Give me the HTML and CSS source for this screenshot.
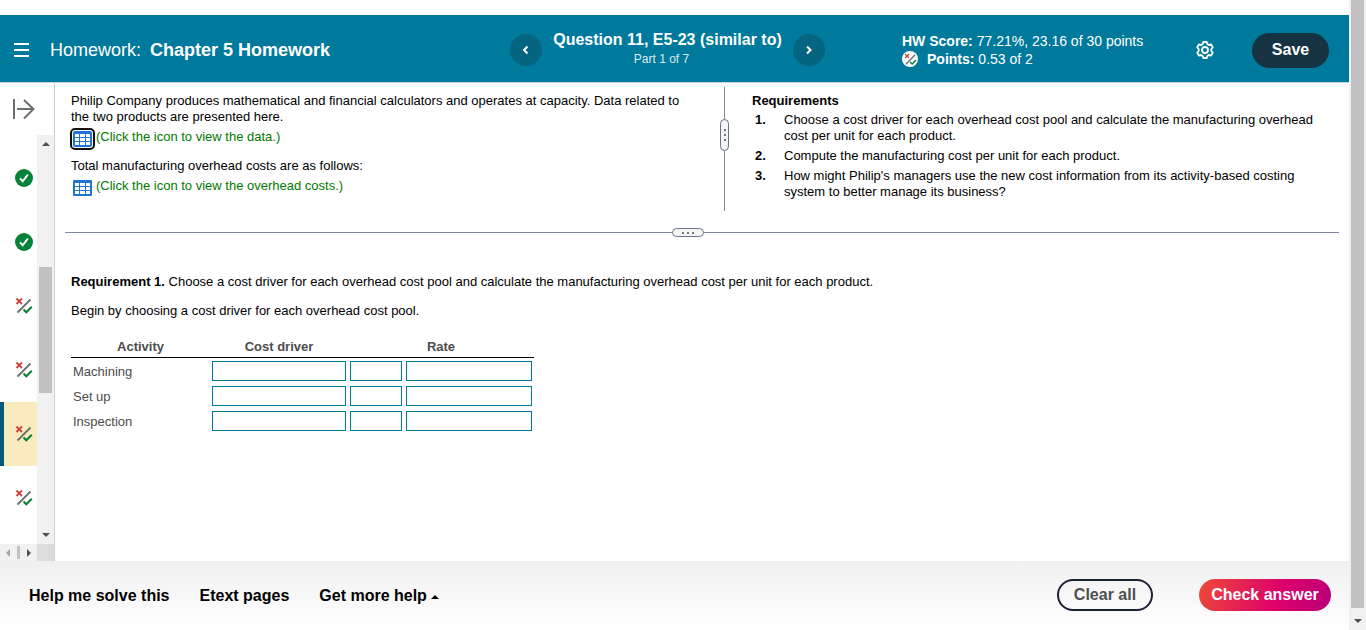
FILE: index.html
```
<!DOCTYPE html>
<html lang="en">

<head>
    <meta charset="UTF-8">
    <meta name="viewport" content="width=device-width, initial-scale=1.0">
    <title>Chapter 5 Homework</title>
    <link rel="stylesheet" href="styles.css">
</head>

<body>
    <!-- shared icons -->
    <svg class="sprite" aria-hidden="true">
        <symbol id="icon-done" viewBox="0 0 18 18">
            <circle cx="9" cy="9" r="9" fill="#038238" />
            <path d="M5 9.4l2.7 2.9 5.2-6.8" fill="none" stroke="#fff" stroke-width="2" />
        </symbol>
        <symbol id="icon-partial" viewBox="0 0 18 18">
            <path d="M1.5 1.5l5.5 5.5M7 1.5l-5.5 5.5" fill="none" stroke="#d0413e" stroke-width="1.8" />
            <path d="M2.5 15.5l13-13" fill="none" stroke="#6a7070" stroke-width="1.8" />
            <path d="M8.5 12.5l2.8 2.8 5.5-5.5" fill="none" stroke="#038238" stroke-width="2" />
        </symbol>
        <symbol id="icon-table" viewBox="0 0 19 16">
            <rect width="19" height="16" rx="1" fill="#2074d8" />
            <path d="M2 3h4v3H2zM7 3h5v3H7zM13 3h4v3h-4zM2 7h4v3H2zM7 7h5v3H7zM13 7h4v3h-4zM2 11h4v3H2zM7 11h5v3H7zM13 11h4v3h-4z" fill="#fff" />
        </symbol>
    </svg>

    <div class="app">
        <header class="header">
            <button type="button" class="menu-btn" aria-label="Menu">
                <svg width="15" height="14" viewBox="0 0 15 14"><path d="M0 1h15M0 7h15M0 13h15" stroke="#fff" stroke-width="2" /></svg>
            </button>
            <h1 class="title">Homework: <b>Chapter 5 Homework</b></h1>
            <nav class="question-nav">
                <button type="button" class="round-btn" aria-label="Previous question">
                    <svg width="8" height="10" viewBox="0 0 8 10"><path d="M5.5 1.5L2 5l3.5 3.5" fill="none" stroke="#fff" stroke-width="2" /></svg>
                </button>
                <div class="question">
                    <h2>Question 11, E5-23 (similar to)</h2>
                    <p>Part 1 of 7</p>
                </div>
                <button type="button" class="round-btn" aria-label="Next question">
                    <svg width="8" height="10" viewBox="0 0 8 10"><path d="M2 1.5L5.5 5 2 8.5" fill="none" stroke="#fff" stroke-width="2" /></svg>
                </button>
            </nav>
            <div class="tools">
                <div class="score">
                    <p><b>HW Score:</b> 77.21%, 23.16 of 30 points</p>
                    <p class="points"><span class="points-icon"><svg width="13" height="13"><use href="#icon-partial" /></svg></span><span><b>Points:</b> 0.53 of 2</span></p>
                </div>
                <button type="button" class="gear-btn" aria-label="Settings">
                    <svg width="18" height="18" viewBox="0 0 18 18" fill="none" stroke="#fff" stroke-width="1.8" stroke-linejoin="round">
                        <path d="M7.3 1h3.4l.7 2.1 1.5.9 2.2-.5 1.7 2.9L15.3 8v2l1.5 1.6-1.7 2.9-2.2-.5-1.5.9-.7 2.1H7.3l-.7-2.1-1.5-.9-2.2.5-1.7-2.900L2.7 10V8L1.2 6.400l1.700-2.900 2.200.5 1.500-.9z" />
                        <circle cx="9" cy="9" r="3" />
                    </svg>
                </button>
                <button type="button" class="save-btn">Save</button>
            </div>
        </header>

        <div class="workspace">
            <aside class="sidebar">
                <button type="button" class="expand-btn" aria-label="Expand question list">
                    <svg width="23" height="21" viewBox="0 0 23 21"><path d="M2 0v20M5 10h16.500M12 1l9.500 9-9.500 9.500" fill="none" stroke="#6a7070" stroke-width="2" /></svg>
                </button>
                <div class="list-area">
                    <ul class="question-list">
                        <li><a href="#" aria-label="Question 7"><svg width="18" height="18"><use href="#icon-done" /></svg></a></li>
                        <li><a href="#" aria-label="Question 8"><svg width="18" height="18"><use href="#icon-done" /></svg></a></li>
                        <li><a href="#" aria-label="Question 9"><svg width="18" height="18"><use href="#icon-partial" /></svg></a></li>
                        <li><a href="#" aria-label="Question 10"><svg width="18" height="18"><use href="#icon-partial" /></svg></a></li>
                        <li class="active"><a href="#" aria-label="Question 11"><svg width="18" height="18"><use href="#icon-partial" /></svg></a></li>
                        <li><a href="#" aria-label="Question 12"><svg width="18" height="18"><use href="#icon-partial" /></svg></a></li>
                    </ul>
                    <div class="scrollbar">
                        <i class="arrow up"></i>
                        <div class="track list-track"><div class="thumb"></div></div>
                        <i class="arrow down"></i>
                    </div>
                </div>
                <div class="scroll-x">
                    <div class="scroll-x-bar"><i class="arrow left"></i><i class="thumb-x"></i><i class="arrow right"></i></div>
                    <div class="corner"></div>
                </div>
            </aside>

            <main class="content">
                <div class="panels">
                    <section class="problem">
                        <p>Philip Company produces mathematical and financial calculators and operates at capacity. Data related to the two products are presented here.</p>
                        <a href="#" class="view-link"><span class="table-icon focused"><svg width="19" height="16"><use href="#icon-table" /></svg></span>(Click the icon to view the data.)</a>
                        <p>Total manufacturing overhead costs are as follows:</p>
                        <a href="#" class="view-link"><span class="table-icon"><svg width="19" height="16"><use href="#icon-table" /></svg></span>(Click the icon to view the overhead costs.)</a>
                    </section>
                    <div class="divider-y"><span class="handle"><i></i><i></i><i></i></span></div>
                    <section class="requirements">
                        <h3>Requirements</h3>
                        <dl>
                            <dt>1.</dt>
                            <dd>Choose a cost driver for each overhead cost pool and calculate the manufacturing overhead cost per unit for each product.</dd>
                            <dt>2.</dt>
                            <dd>Compute the manufacturing cost per unit for each product.</dd>
                            <dt>3.</dt>
                            <dd>How might Philip's managers use the new cost information from its activity-based costing system to better manage its business?</dd>
                        </dl>
                    </section>
                </div>
                <div class="divider-x"><span class="handle"><i></i><i></i><i></i></span></div>

                <section class="answer">
                    <p><b>Requirement 1.</b> Choose a cost driver for each overhead cost pool and calculate the manufacturing overhead cost per unit for each product.</p>
                    <p>Begin by choosing a cost driver for each overhead cost pool.</p>
                    <table class="driver-table">
                        <colgroup>
                            <col class="col-activity">
                            <col class="col-driver">
                            <col class="col-amount">
                            <col class="col-unit">
                        </colgroup>
                        <thead>
                            <tr>
                                <th>Activity</th>
                                <th>Cost driver</th>
                                <th colspan="2">Rate</th>
                            </tr>
                        </thead>
                        <tbody>
                            <tr>
                                <td>Machining</td>
                                <td><input type="text" aria-label="Machining cost driver"></td>
                                <td><input type="text" aria-label="Machining rate"></td>
                                <td><input type="text" aria-label="Machining rate unit"></td>
                            </tr>
                            <tr>
                                <td>Set up</td>
                                <td><input type="text" aria-label="Set up cost driver"></td>
                                <td><input type="text" aria-label="Set up rate"></td>
                                <td><input type="text" aria-label="Set up rate unit"></td>
                            </tr>
                            <tr>
                                <td>Inspection</td>
                                <td><input type="text" aria-label="Inspection cost driver"></td>
                                <td><input type="text" aria-label="Inspection rate"></td>
                                <td><input type="text" aria-label="Inspection rate unit"></td>
                            </tr>
                        </tbody>
                    </table>
                </section>
            </main>
        </div>

        <footer class="footer">
            <div class="help-links">
                <a href="#">Help me solve this</a>
                <a href="#">Etext pages</a>
                <a href="#">Get more help <i class="caret"></i></a>
            </div>
            <button type="button" class="clear-btn">Clear all</button>
            <button type="button" class="check-btn">Check answer</button>
        </footer>
    </div>

    <div class="scrollbar page-scrollbar">
        <div class="track"><div class="thumb"></div></div>
        <i class="arrow down"></i>
    </div>
</body>

</html>
```
FILE: styles.css
```
* {
    box-sizing: border-box;
}

body,
h1,
h2,
h3,
p,
ul,
dl,
dd {
    margin: 0;
    padding: 0;
}

body {
    display: flex;
    min-height: 100vh;
    background: #fff;
    color: #000;
    font-family: "Liberation Sans", Arial, sans-serif;
    font-size: 13px;
    line-height: 16px;
}

button {
    padding: 0;
    border: 0;
    background: none;
    font-family: inherit;
    cursor: pointer;
}

a {
    text-decoration: none;
}

svg {
    display: block;
}

.sprite {
    position: absolute;
    width: 0;
    height: 0;
}

.app {
    flex: 1;
    display: flex;
    flex-direction: column;
    min-width: 0;
    padding-top: 15px;
}

/* header */
.header {
    display: flex;
    align-items: center;
    height: 68px;
    padding: 3px 20px 0 14px;
    background: #007a9c;
    border-bottom: 1px solid #c7cfdc;
    color: #fff;
}

.title {
    flex: 1;
    margin-left: 21px;
    font-size: 18px;
    font-weight: normal;
    line-height: 20px;
}

.title b {
    margin-left: 4px;
}

.question-nav {
    display: flex;
    align-items: center;
    justify-content: space-between;
    width: 315px;
    margin-right: 77px;
}

.round-btn {
    display: flex;
    align-items: center;
    justify-content: center;
    width: 32px;
    height: 32px;
    border-radius: 50%;
    background: #05647f;
}

.question {
    padding-bottom: 2px;
    text-align: center;
}

.question h2 {
    font-size: 16px;
    line-height: 20px;
}

.question p {
    padding-right: 12px;
    font-size: 12px;
    line-height: 18px;
    color: #dcecf1;
}

.tools {
    display: flex;
    align-items: center;
    width: 427px;
}

.score {
    flex: 1;
    font-size: 14px;
    line-height: 18px;
}

.points {
    display: flex;
    align-items: center;
    gap: 9px;
}

.points-icon {
    display: flex;
    align-items: center;
    justify-content: center;
    width: 16px;
    height: 16px;
    border-radius: 50%;
    background: #fff;
}

.gear-btn {
    margin-right: 38px;
}

.save-btn {
    width: 77px;
    height: 35px;
    border-radius: 18px;
    background: #163344;
    color: #fff;
    font-size: 16px;
    font-weight: bold;
}

/* question list */
.workspace {
    flex: 1;
    display: flex;
}

.sidebar {
    display: flex;
    flex-direction: column;
    width: 55px;
    border-right: 1px solid #c7cfdc;
}

.expand-btn {
    height: 52px;
    padding-left: 12px;
}

.list-area {
    flex: 1;
    display: flex;
}

.question-list {
    flex: 1;
    padding-top: 11px;
    list-style: none;
}

.question-list a {
    display: flex;
    align-items: center;
    height: 64px;
    padding-left: 15px;
}

.question-list .active {
    background: #f9ebbd;
    box-shadow: inset 4px 0 #005a78;
}

/* scroll bars */
.scrollbar {
    display: flex;
    flex-direction: column;
    align-items: center;
    justify-content: space-between;
    width: 17px;
    padding: 7px 0;
    background: #f1f1f1;
}

.track {
    flex: 1;
    display: flex;
    width: 13px;
}

.list-track {
    padding: 121px 0 140px;
}

.thumb {
    width: 100%;
    background: #c1c1c1;
}

.page-scrollbar {
    padding-top: 0;
}

.page-scrollbar .track {
    margin-bottom: 11px;
}

.arrow {
    border: 4px solid transparent;
}

.arrow.up {
    border-top: 0;
    border-bottom-color: #505050;
}

.arrow.down {
    border-bottom: 0;
    border-top-color: #505050;
}

.arrow.left {
    border-left: 0;
    border-right-color: #a3a3a3;
}

.arrow.right {
    border-right: 0;
    border-left-color: #505050;
}

.scroll-x {
    display: flex;
    height: 17px;
}

.scroll-x-bar {
    flex: 1;
    display: flex;
    align-items: center;
    justify-content: space-between;
    padding: 0 6px;
    background: #f1f1f1;
}

.thumb-x {
    width: 3px;
    height: 13px;
    background: #c1c1c1;
}

.corner {
    width: 17px;
    background: #dcdcdc;
}

/* problem text */
.content {
    flex: 1;
    padding: 4px 10px 0;
}

.panels {
    display: flex;
}

.problem {
    width: 653px;
    padding: 6px 35px 0 6px;
}

.view-link {
    display: flex;
    margin-bottom: 13px;
    padding-top: 4px;
    color: #007a00;
}

.table-icon {
    width: 25px;
    height: 16px;
    padding: 2px 0 0 2px;
}

.focused svg {
    outline: 2px solid #101010;
    outline-offset: 1px;
    border-radius: 2px;
}

.divider-y {
    display: flex;
    align-items: center;
    justify-content: center;
    width: 13px;
    height: 124px;
    padding-bottom: 28px;
    background: linear-gradient(#8088a0, #8088a0) center / 1px 100% no-repeat;
}

.divider-x {
    display: flex;
    align-items: center;
    justify-content: center;
    height: 9px;
    margin-top: 17px;
    padding-right: 28px;
    background: linear-gradient(#8088a0, #8088a0) center / 100% 1px no-repeat;
}

.handle {
    display: flex;
    align-items: center;
    justify-content: center;
    gap: 3px;
    border: 1px solid #6a7488;
    border-radius: 5px;
    background: #f5f5f5;
}

.handle i {
    width: 2px;
    height: 2px;
    background: #70747c;
}

.divider-y .handle {
    flex-direction: column;
    width: 9px;
    height: 32px;
}

.divider-x .handle {
    width: 32px;
    height: 9px;
}

.requirements {
    flex: 1;
    padding: 6px 0 0 21px;
}

.requirements h3 {
    margin-bottom: 3px;
    font-size: 13px;
}

.requirements dl {
    display: grid;
    grid-template-columns: 25px 1fr;
    gap: 4px;
    padding-left: 3px;
}

.requirements dt {
    font-weight: bold;
}

/* answer table */
.answer {
    padding: 37px 6px 0;
}

.answer p {
    margin-bottom: 13px;
}

.driver-table {
    width: 463px;
    margin-top: 18px;
    table-layout: fixed;
    border-collapse: collapse;
    color: #4c4c4c;
}

.col-activity {
    width: 139px;
}

.col-driver {
    width: 138px;
}

.col-amount {
    width: 56px;
}

.driver-table th {
    height: 20px;
    padding: 2px 0 1px;
    border-bottom: 1px solid #000;
}

.driver-table td {
    height: 25px;
    padding: 3px 2px 2px;
}

.driver-table td:first-child {
    padding: 6px 2px 2px;
}

.driver-table input {
    display: block;
    width: 100%;
    height: 20px;
    padding: 0 4px;
    border: 1px solid #007a9c;
    background: #fff;
    font: inherit;
}

/* footer */
.footer {
    display: flex;
    align-items: center;
    gap: 46px;
    height: 69px;
    padding: 0 18px 1px 29px;
    background: linear-gradient(#f0f0f0, #fff);
    font-size: 16px;
}

.help-links {
    flex: 1;
    display: flex;
    gap: 30px;
    padding-top: 2px;
}

.help-links a {
    color: #000;
    font-weight: bold;
}

.caret {
    display: inline-block;
    margin-bottom: 2px;
    border: 4px solid transparent;
    border-top: 0;
    border-bottom-color: #000;
}

.clear-btn,
.check-btn {
    height: 32px;
    border-radius: 16px;
    font-size: 16px;
    font-weight: bold;
}

.clear-btn {
    width: 96px;
    border: 2px solid #1c2233;
    color: #505050;
}

.check-btn {
    width: 132px;
    background: linear-gradient(110deg, #ee4a36, #de006c 60%, #b80078);
    color: #fff;
}
```
